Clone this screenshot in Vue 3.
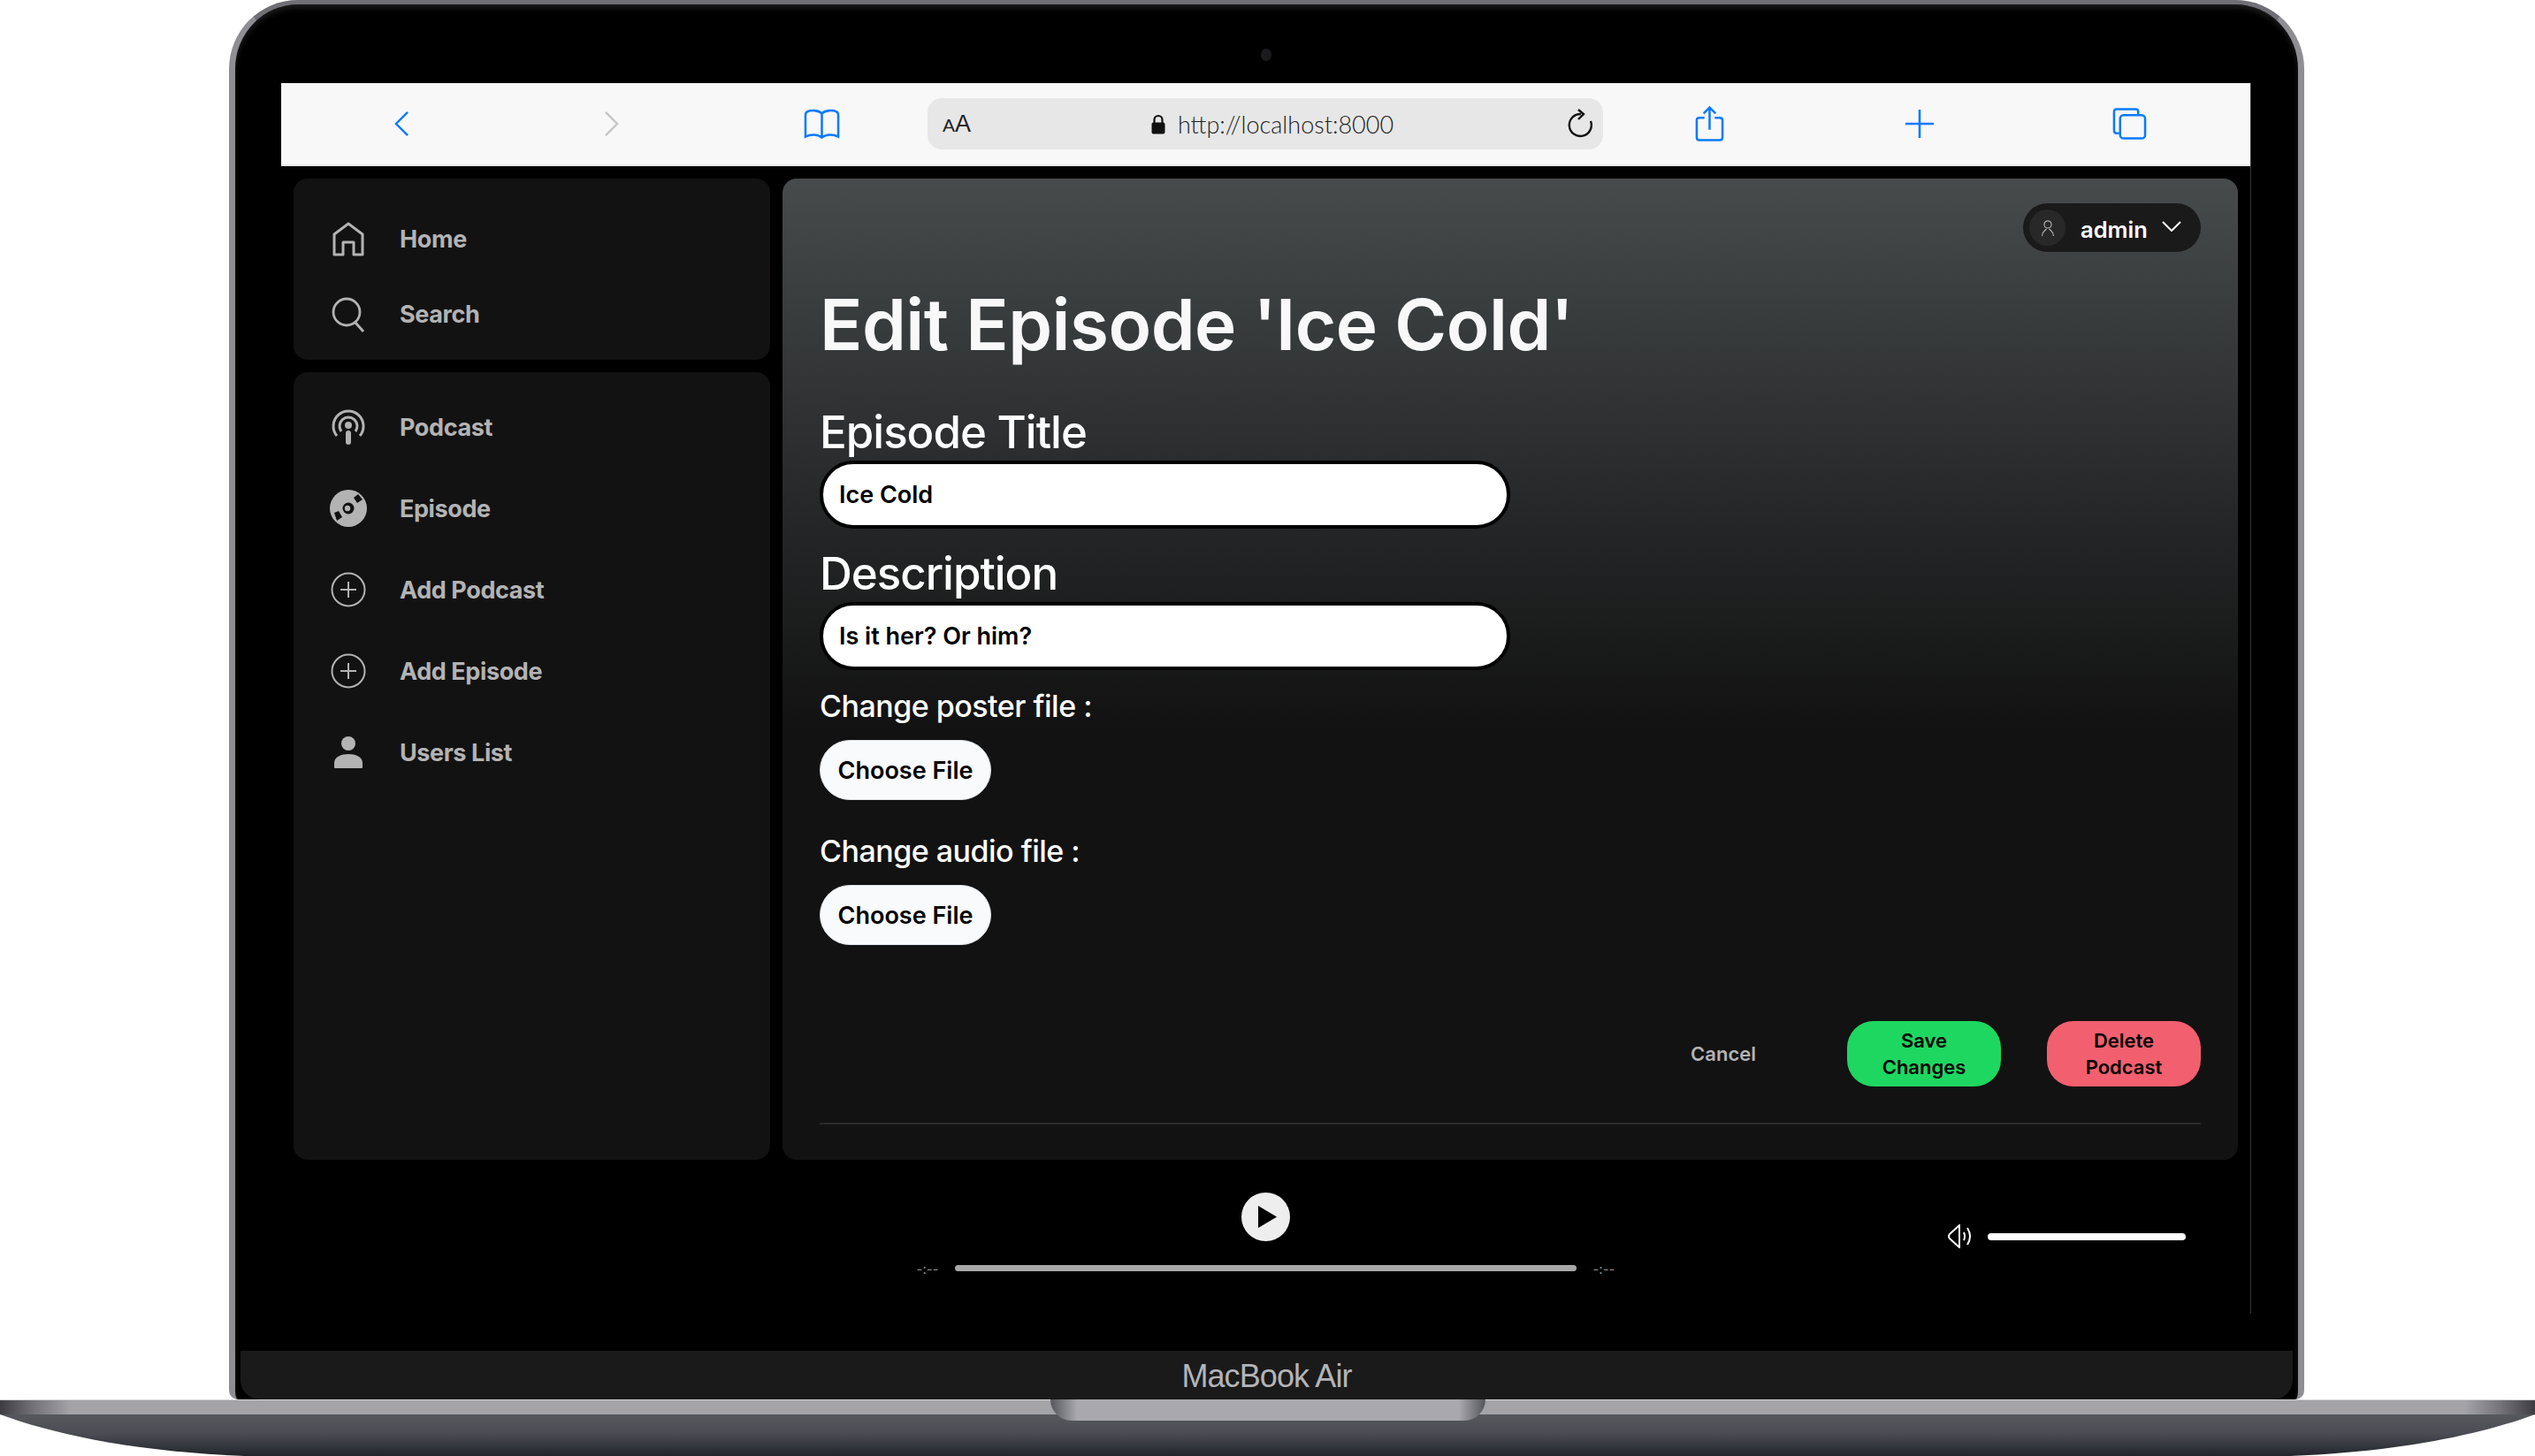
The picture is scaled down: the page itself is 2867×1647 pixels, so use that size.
<script setup>
const topNav = [
  { label: "Home", icon: "home" },
  { label: "Search", icon: "search" },
];
const libNav = [
  { label: "Podcast", icon: "podcast" },
  { label: "Episode", icon: "disc" },
  { label: "Add Podcast", icon: "plus" },
  { label: "Add Episode", icon: "plus" },
  { label: "Users List", icon: "user" },
];
</script>

<template>
  <div class="stage">
    <div class="lid">
      <div class="camera"></div>
      <div class="display">
        <div class="screen">
          <div class="browserBar">
            <svg class="tool back" viewBox="0 0 18 32"><path d="M16 2 L2 16 L16 30" /></svg>
            <svg class="tool forward" viewBox="0 0 18 32"><path d="M2 2 L16 16 L2 30" /></svg>
            <svg class="tool book" viewBox="0 0 42 34"><path d="M21 5 C17 1 8 1 4 3 Q2 4 2 7 V32 C8 29 16 29 21 33 C26 29 34 29 40 32 V7 Q40 4 38 3 C34 1 25 1 21 5 Z M21 5 V33" /></svg>
            <div class="address">
              <span class="aa"><small>A</small>A</span>
              <span class="url">
                <svg class="lock" viewBox="0 0 16 23"><path d="M3.5 10 V6.5 a4.5 4.5 0 0 1 9 0 V10" fill="none" stroke="#111" stroke-width="2.2" /><rect x="0.5" y="9.5" width="15" height="13" rx="2" fill="#111" /></svg>
                http://localhost:8000
              </span>
              <svg class="reload" viewBox="0 0 30 34"><path d="M16 6 A12.5 12.5 0 1 0 27 14" fill="none" stroke="#111" stroke-width="2.4" /><path d="M13 1 L19 6 L13 12" fill="none" stroke="#111" stroke-width="2.4" /></svg>
            </div>
            <svg class="tool share" viewBox="0 0 34 42"><path d="M11 14 H5 Q2 14 2 17 V37 Q2 40 5 40 H29 Q32 40 32 37 V17 Q32 14 29 14 H23 M17 28 V2 M10 9 L17 2 L24 9" /></svg>
            <svg class="tool plus" viewBox="0 0 32 32"><path d="M16 0 V32 M0 16 H32" /></svg>
            <svg class="tool tabs" viewBox="0 0 40 38"><path d="M8 30 H5 Q2 30 2 27 V5 Q2 2 5 2 H27 Q30 2 30 5 V8" /><rect x="9" y="9" width="29" height="27" rx="4" /></svg>
          </div>

          <div class="app">
            <div class="panels">
              <aside class="sidebar">
                <nav class="navBox navTop">
                  <a v-for="item in topNav" :key="item.label" class="navItem">
                    <svg v-if="item.icon === 'home'" class="navIcon" viewBox="0 0 42 40"><path d="M5 37 V14 L21 2 L37 14 V37 H27 V23 H15 V37 Z" fill="none" stroke="#b3b3b3" stroke-width="3" stroke-linejoin="round" /></svg>
                    <svg v-else class="navIcon" viewBox="0 0 42 40"><circle cx="19" cy="17" r="15" fill="none" stroke="#b3b3b3" stroke-width="2.8" /><path d="M29 29 L38 39" stroke="#b3b3b3" stroke-width="3" /></svg>
                    {{ item.label }}
                  </a>
                </nav>
                <nav class="navBox navLib">
                  <a v-for="item in libNav" :key="item.label" class="navItem">
                    <svg v-if="item.icon === 'podcast'" class="navIcon" viewBox="0 0 42 40">
                      <path d="M8 30 A17 17 0 1 1 34 30" fill="none" stroke="#b3b3b3" stroke-width="3" />
                      <path d="M13 25 A10 10 0 1 1 29 25" fill="none" stroke="#b3b3b3" stroke-width="3" />
                      <circle cx="21" cy="18" r="4" fill="#b3b3b3" />
                      <path d="M21 27 V37" stroke="#b3b3b3" stroke-width="6" stroke-linecap="round" />
                    </svg>
                    <svg v-else-if="item.icon === 'disc'" class="navIcon" viewBox="0 0 42 42">
                      <circle cx="21" cy="21" r="21" fill="#b3b3b3" />
                      <circle cx="21" cy="21" r="6.5" fill="#121212" />
                      <circle cx="20" cy="21" r="3.2" fill="#b3b3b3" />
                      <path d="M27 9 L32 5 L37 11 L31 15 Z M5 26 L10 24 L14 31 L8 35 Z" fill="#121212" />
                    </svg>
                    <svg v-else-if="item.icon === 'plus'" class="navIcon" viewBox="0 0 42 40">
                      <ellipse cx="21" cy="20" rx="18.5" ry="18.5" fill="none" stroke="#b3b3b3" stroke-width="2" />
                      <path d="M21 11 V29 M12 20 H30" stroke="#b3b3b3" stroke-width="2" />
                    </svg>
                    <svg v-else class="navIcon" viewBox="0 0 42 40">
                      <circle cx="21" cy="10" r="8" fill="#b3b3b3" />
                      <path d="M5 37 V32 C5 25 13 22 21 22 C29 22 37 25 37 32 V37 Q37 38 36 38 H6 Q5 38 5 37 Z" fill="#b3b3b3" />
                    </svg>
                    {{ item.label }}
                  </a>
                </nav>
              </aside>

              <main class="content">
                <div class="topRow">
                  <div class="userPill">
                    <span class="avatar">
                      <svg viewBox="0 0 22 26"><circle cx="11" cy="8" r="5" fill="none" stroke="#b3b3b3" stroke-width="1.4" /><path d="M3 24 C3 18 7 17 9 14 M19 24 C19 18 15 17 13 14" fill="none" stroke="#b3b3b3" stroke-width="1.4" /></svg>
                    </span>
                    <span class="userName">admin</span>
                    <svg class="caret" viewBox="0 0 22 12"><path d="M1 1 L11 11 L21 1" fill="none" stroke="#fff" stroke-width="2" /></svg>
                  </div>
                </div>

                <h1 class="title">Edit Episode 'Ice Cold'</h1>

                <label class="bigLabel first">Episode Title</label>
                <input class="textInput" value="Ice Cold" />
                <label class="bigLabel second">Description</label>
                <input class="textInput" value="Is it her? Or him?" />

                <label class="smallLabel poster">Change poster file :</label>
                <button class="fileBtn">Choose File</button>
                <label class="smallLabel audio">Change audio file :</label>
                <button class="fileBtn">Choose File</button>

                <div class="actions">
                  <span class="cancel">Cancel</span>
                  <button class="actionBtn save">Save Changes</button>
                  <button class="actionBtn delete">Delete Podcast</button>
                </div>
                <div class="divider"></div>
              </main>
            </div>

            <div class="player">
              <div class="controls">
                <button class="playBtn"><svg viewBox="0 0 21 25"><path d="M0 0 L21 12.5 L0 25 Z" fill="#000" /></svg></button>
                <div class="timeline">
                  <span class="time">-:--</span>
                  <div class="progress"></div>
                  <span class="time">-:--</span>
                </div>
              </div>
              <div class="volume">
                <svg class="speaker" viewBox="0 0 27 27"><path d="M13 1 V26 L2 16 Q0 13.5 2 11 Z M18 9 Q20 13.5 18 18 M22 4 Q28 13.5 22 23" fill="none" stroke="#fff" stroke-width="2" /></svg>
                <div class="volumeBar"></div>
              </div>
            </div>
          </div>
        </div>
      </div>
      <div class="chin">MacBook Air</div>
    </div>

    <div class="base">
      <div class="strip"><div class="hinge"></div></div>
      <div class="underside"></div>
    </div>
  </div>
</template>

<style scoped>
.stage {
  width: 2867px;
  height: 1647px;
  overflow: hidden;
  background: #fff;
  display: flex;
  flex-direction: column;
  font-family: Inter, "Liberation Sans", sans-serif;
}

/* laptop */
.lid {
  position: relative;
  box-sizing: border-box;
  width: 2347px;
  height: 1583px;
  margin: 0 auto 0 259px;
  display: flex;
  flex-direction: column;
  background: #000;
  border: 7px solid #8e8e93;
  border-top: 5px solid #6f6f75;
  border-bottom: none;
  border-radius: 78px 78px 10px 10px;
  box-shadow: inset 0 4px 6px #1c1c1e;
}
.camera {
  position: absolute;
  left: 1160px;
  top: 50px;
  width: 12px;
  height: 14px;
  border-radius: 50%;
  background: #1b1b1d;
}
.display {
  flex: 1;
  padding: 89px 53px 0 52px;
  min-height: 0;
}
.screen {
  height: 1392px;
  border-right: 1px solid #333;
  display: flex;
  flex-direction: column;
}
.chin {
  height: 55px;
  margin: 0 6px;
  flex: none;
  background: #1a1a1a;
  border-radius: 0 0 22px 22px;
  color: #b4b4b8;
  font-family: "Liberation Sans", sans-serif;
  font-size: 36px;
  letter-spacing: -0.9px;
  line-height: 58px;
  text-align: center;
}
.base {
  height: 64px;
  flex: none;
}
.strip {
  height: 17px;
  display: flex;
  justify-content: center;
  background: linear-gradient(90deg, #3c3c42 0, #75757b 40px, #a3a3a8 80px, #a3a3a8 2787px, #75757b 2827px, #3c3c42 2867px);
  border-top: 1px solid #d5d5d8;
  box-sizing: border-box;
}
.hinge {
  width: 492px;
  height: 24px;
  margin-top: -1px;
  position: relative;
  z-index: 1;
  background: linear-gradient(90deg, #55565b 0, #a8a8ae 30px, #a8a8ae 462px, #55565b 492px);
  border-radius: 0 0 26px 26px;
}
.underside {
  height: 47px;
  background: linear-gradient(#56585e 0, #4c4d54 45%, #23252c 100%);
  clip-path: path("M0 0 H2867 C2807 22 2717 42 2590 47 H277 C150 42 60 22 0 0 Z");
}

/* browser chrome */
.browserBar {
  height: 94px;
  flex: none;
  box-sizing: border-box;
  display: grid;
  grid-template-columns: 128px 17px 220px 17px 209px 41px 99px 764px 104px 33px 205px 32px 202px 39px;
  align-items: center;
  background: #f8f8f8;
  border-bottom: 2px solid #e8e8e8;
}
.tool {
  fill: none;
  stroke: #0a7aff;
  stroke-width: 2.6;
}
.back { grid-column: 2; width: 17px; height: 30px; }
.forward { grid-column: 4; width: 17px; height: 30px; stroke: #c6c6c8; }
.book { grid-column: 6; width: 41px; height: 34px; }
.address {
  grid-column: 8;
  height: 58px;
  position: relative;
  display: flex;
  align-items: center;
  padding: 0 11px 0 17px;
  border-radius: 16px;
  background: #e7e7e7;
  color: #222;
}
.aa {
  font-family: "Liberation Sans", sans-serif;
  font-size: 27px;
  line-height: 1;
  font-weight: 400;
}
.aa small { font-size: 21px; }
.url {
  flex: 1;
  display: flex;
  align-items: center;
  justify-content: center;
  gap: 14px;
  margin-left: 8px;
  font-family: Lato, sans-serif;
  font-size: 27px;
  font-weight: 300;
}
.lock { width: 16px; height: 23px; }
.reload { width: 30px; height: 34px; }
.share { grid-column: 10; width: 33px; height: 42px; }
.plus { grid-column: 12; width: 32px; height: 32px; }
.tabs { grid-column: 14; width: 39px; height: 38px; }

/* app */
.app {
  flex: 1;
  min-height: 0;
  display: flex;
  flex-direction: column;
  background: #000;
}
.panels {
  height: 1124px;
  flex: none;
  box-sizing: border-box;
  padding: 14px 14px 0;
  display: flex;
  gap: 14px;
}
.sidebar {
  width: 539px;
  flex: none;
  display: flex;
  flex-direction: column;
  gap: 14px;
}
.navBox {
  box-sizing: border-box;
  background: #121212;
  border-radius: 16px;
}
.navTop {
  height: 205px;
  padding: 26px 0 10px;
}
.navLib {
  flex: 1;
  padding-top: 16px;
}
.navItem {
  display: flex;
  align-items: center;
  gap: 37px;
  padding-left: 41px;
  color: #b3b3b3;
  font-size: 27px;
  font-weight: 700;
  letter-spacing: -0.4px;
}
.navTop .navItem { height: 85px; }
.navLib .navItem { height: 92px; }
.navIcon {
  width: 42px;
  height: 42px;
  flex: none;
}
.content {
  flex: 1;
  min-width: 0;
  box-sizing: border-box;
  padding: 28px 42px 0;
  display: flex;
  flex-direction: column;
  align-items: flex-start;
  border-radius: 16px;
  color: #fff;
  background: linear-gradient(#474b4c 0, #2e3031 25%, #121212 56%);
}
.topRow {
  align-self: stretch;
  display: flex;
  justify-content: flex-end;
}
.userPill {
  width: 201px;
  height: 55px;
  box-sizing: border-box;
  padding: 0 22px 0 7px;
  display: flex;
  align-items: center;
  border-radius: 28px;
  background: #1a1a1a;
}
.avatar {
  width: 41px;
  height: 41px;
  border-radius: 50%;
  background: #282828;
  display: flex;
  align-items: center;
  justify-content: center;
}
.avatar svg { width: 18px; height: 24px; }
.userName {
  margin: 3px 0 0 17px;
  font-size: 25.5px;
  font-weight: 600;
}
.caret {
  width: 22px;
  height: 12px;
  margin-left: auto;
  margin-top: -4px;
}
.title {
  margin: 34px 0 0;
  font-size: 80px;
  line-height: 96px;
  font-weight: 600;
  letter-spacing: -0.5px;
  color: #f8f8f8;
}
.bigLabel {
  font-size: 51px;
  line-height: 60px;
  font-weight: 500;
  letter-spacing: -1px;
  margin-bottom: 2px;
}
.first { margin-top: 44px; }
.second { margin-top: 21px; }
.textInput {
  width: 781px;
  height: 77px;
  box-sizing: border-box;
  padding: 0 18px;
  border: 4px solid #000;
  border-radius: 38px;
  outline: none;
  background: #fff;
  color: #000;
  font-family: Inter, sans-serif;
  font-size: 27px;
  font-weight: 600;
}
.smallLabel {
  font-size: 34px;
  line-height: 42px;
  font-weight: 500;
  letter-spacing: -0.5px;
}
.poster { margin-top: 20px; }
.audio { margin-top: 37px; }
.fileBtn {
  width: 194px;
  height: 68px;
  margin-top: 17px;
  padding: 0;
  border: 1px solid #dde0e4;
  border-radius: 34px;
  background: #f9fafb;
  color: #000;
  font-family: Inter, sans-serif;
  font-size: 27px;
  font-weight: 600;
}
.actions {
  align-self: stretch;
  margin-top: 86px;
  display: flex;
  align-items: center;
  justify-content: flex-end;
  gap: 52px;
}
.cancel {
  margin-right: 51px;
  color: #b3b3b3;
  font-size: 22px;
  font-weight: 600;
}
.actionBtn {
  width: 174px;
  height: 74px;
  padding: 0 30px;
  border: none;
  border-radius: 30px;
  color: #000;
  font-family: Inter, sans-serif;
  font-size: 22px;
  font-weight: 600;
  line-height: 30px;
}
.save { background: #1ed760; }
.delete { background: #f25f6e; }
.divider {
  align-self: stretch;
  height: 2px;
  margin-top: 41px;
  background: #2a2a2a;
}

/* player */
.player {
  flex: 1;
  position: relative;
  display: flex;
  justify-content: center;
}
.controls {
  width: 790px;
  padding-top: 37px;
  display: flex;
  flex-direction: column;
  align-items: center;
}
.playBtn {
  width: 55px;
  height: 55px;
  padding: 0 0 0 4px;
  border: none;
  border-radius: 50%;
  background: #eee;
  display: flex;
  align-items: center;
  justify-content: center;
}
.playBtn svg { width: 21px; height: 25px; }
.timeline {
  align-self: stretch;
  margin-top: 18px;
  display: flex;
  align-items: center;
  gap: 18px;
}
.time {
  color: #8a8a8a;
  font-size: 15px;
  line-height: 20px;
  margin-top: 4px;
}
.progress {
  flex: 1;
  height: 7px;
  border-radius: 4px;
  background: #a7a7a7;
}
.volume {
  position: absolute;
  left: 1885px;
  top: 73px;
  display: flex;
  align-items: center;
  gap: 18px;
}
.speaker { width: 27px; height: 27px; }
.volumeBar {
  width: 224px;
  height: 8px;
  border-radius: 4px;
  background: #fff;
}
</style>

<style>
html, body {
  margin: 0;
  background: #fff;
}
</style>
